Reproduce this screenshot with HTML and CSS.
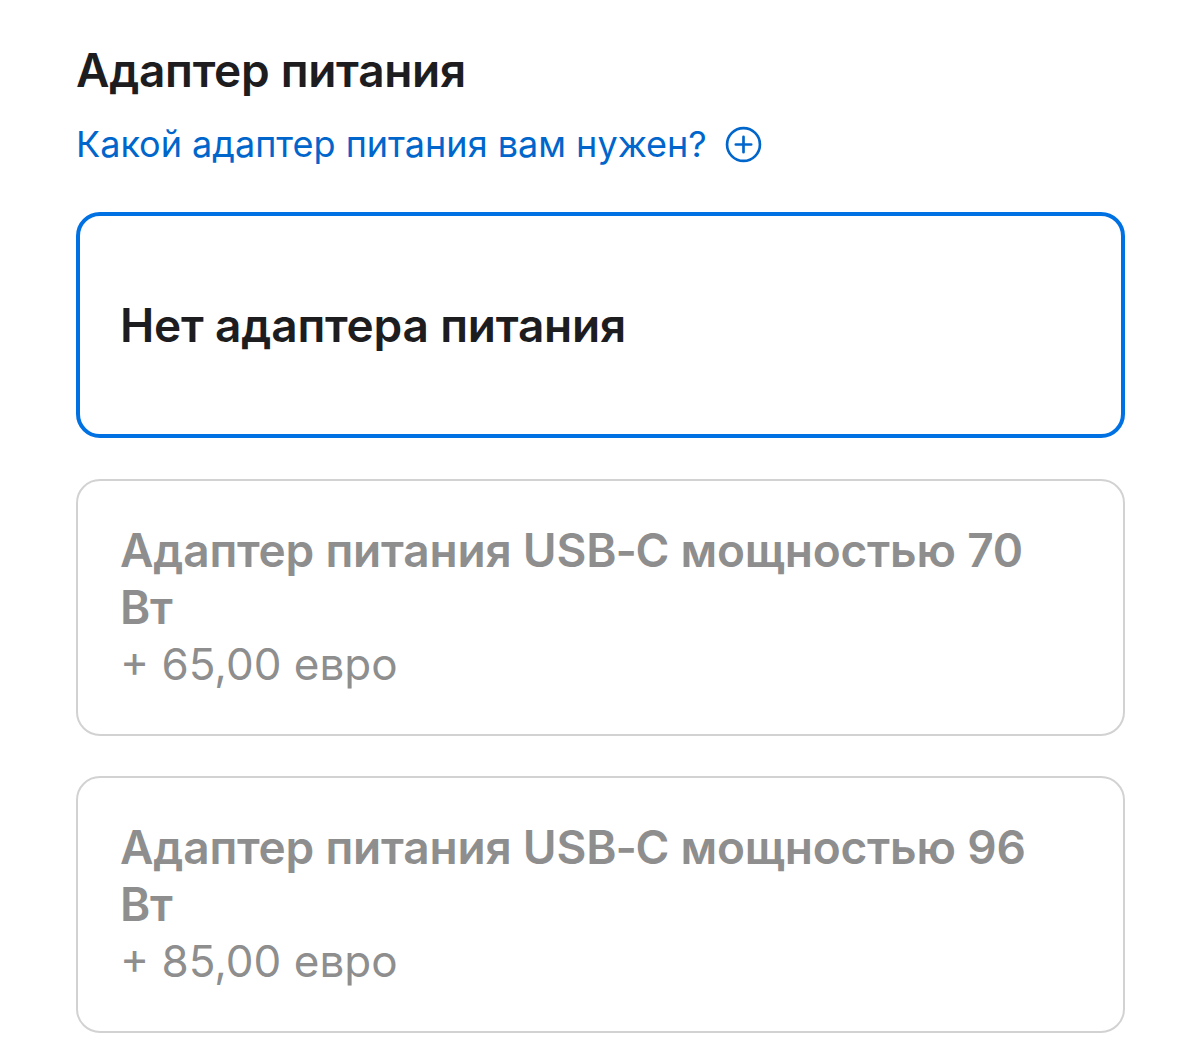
FILE: index.html
```html
<!DOCTYPE html>
<html lang="ru">
<head>
<meta charset="utf-8">
<link rel="stylesheet" href="styles.css">
</head>
<body>
<main class="section">
  <h2 class="title">Адаптер питания</h2>
  <a class="help" href="#">Какой адаптер питания вам нужен?<svg class="plus" viewBox="0 0 36 36" width="37" height="37"><circle cx="18" cy="18" r="16" fill="none" stroke="currentColor" stroke-width="2.6"/><path d="M18 10.5v15M10.5 18h15" stroke="currentColor" stroke-width="2.6" stroke-linecap="round"/></svg></a>
  <div class="options">
    <div class="option selected">
      <span class="name">Нет адаптера питания</span>
    </div>
    <div class="option disabled">
      <span class="name">Адаптер питания USB‑C мощностью 70 Вт</span>
      <span class="price">+ 65,00 евро</span>
    </div>
    <div class="option disabled">
      <span class="name">Адаптер питания USB‑C мощностью 96 Вт</span>
      <span class="price">+ 85,00 евро</span>
    </div>
  </div>
</main>
</body>
</html>
```

FILE: styles.css
```css
* { box-sizing: border-box; }
html, body { margin: 0; background: #fff; }
body {
  font-family: Inter, "Liberation Sans", sans-serif;
  color: #1d1d1f;
}
.section {
  padding: 40px 75px 0 76px;
  display: flex;
  flex-direction: column;
}
.title {
  margin: 0;
  font-size: 46px;
  font-weight: 600;
  line-height: 60px;
  letter-spacing: -0.3px;
}
.help {
  margin-top: 19px;
  display: inline-flex;
  align-items: center;
  gap: 18px;
  color: #0066cc;
  text-decoration: none;
  font-size: 36px;
  line-height: 50px;
  align-self: flex-start;
}
.plus { display: block; }
.options {
  margin-top: 43px;
  display: flex;
  flex-direction: column;
  gap: 40px;
}
.option {
  border-radius: 24px;
  padding: 0 40px 0 40px;
  display: flex;
  flex-direction: column;
  justify-content: center;
}
.selected {
  border: 4px solid #0071e3;
  height: 226px;
}
.disabled {
  border: 2px solid #d2d2d2;
  padding-left: 42px;
  padding-right: 60px;
  height: 257px;
  color: #8e8e8e;
}
.selected + .disabled { margin-top: 1px; }
.name {
  font-size: 46px;
  font-weight: 600;
  line-height: 57px;
  letter-spacing: -0.2px;
}
.selected .name { color: #1d1d1f; }
.price {
  font-size: 44px;
  font-weight: 400;
  line-height: 57px;
}
```
